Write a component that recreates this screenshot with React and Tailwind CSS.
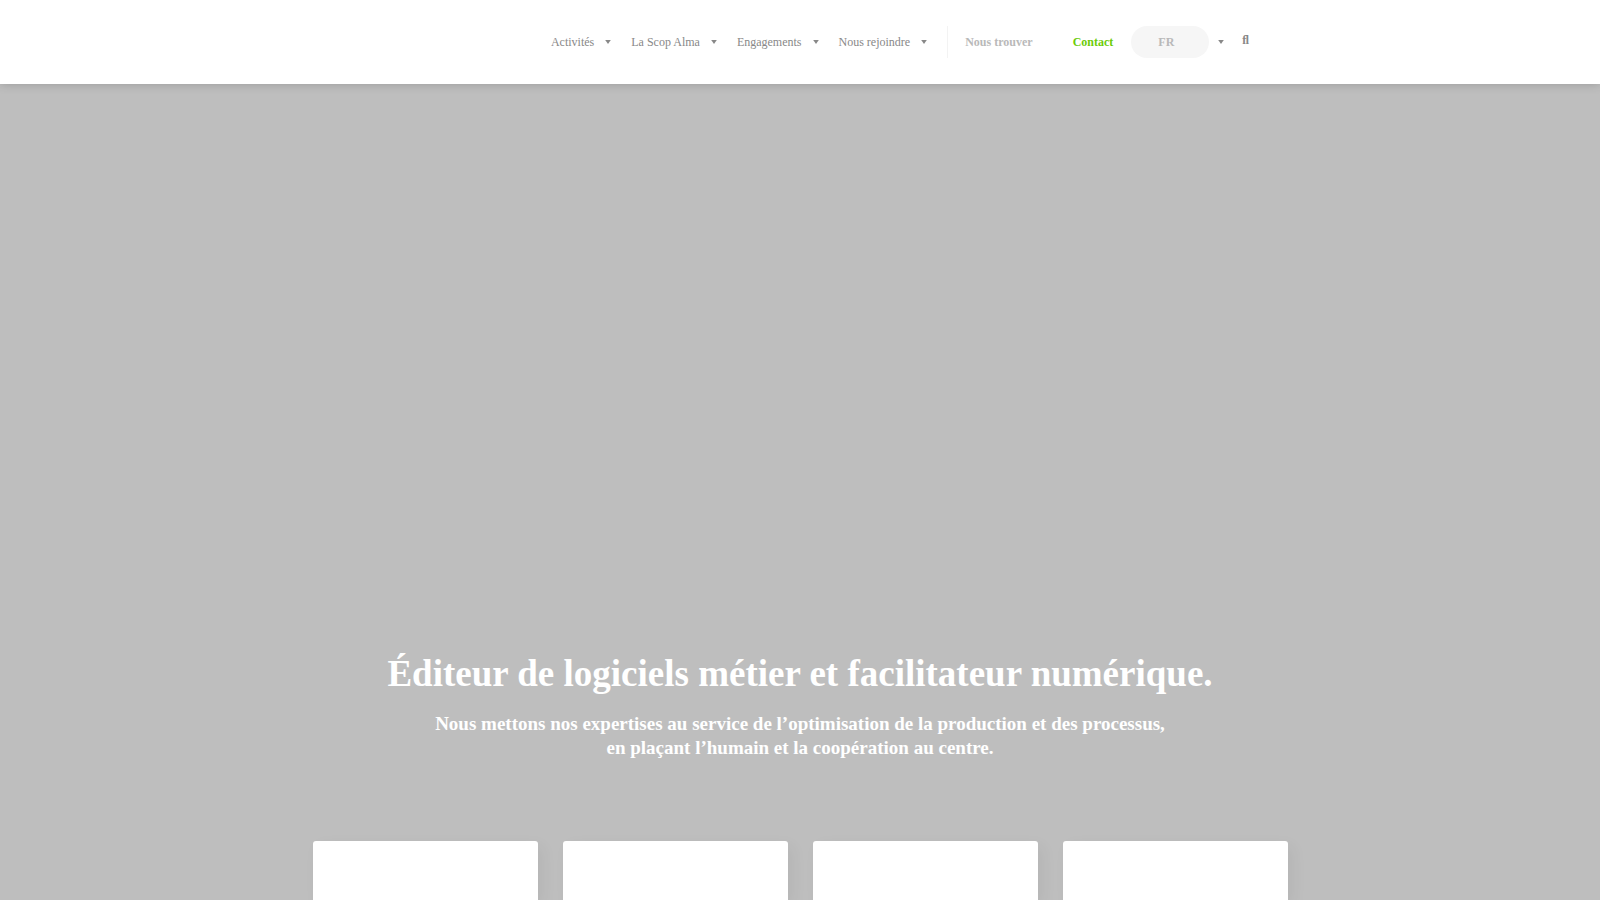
const menus = ["Activités", "La Scop Alma", "Engagements", "Nous rejoindre"];

const cards = ["card-1", "card-2", "card-3", "card-4"];

function Caret() {
  return (
    <svg viewBox="0 0 6 4" className="h-1 w-1.5" fill="currentColor" aria-hidden="true">
      <path d="M0.2 0h5.6L3 4z" />
    </svg>
  );
}

export default function App() {
  return (
    <div className="flex h-screen flex-col overflow-hidden bg-[#bebebe] font-['Liberation_Serif',serif]">
      <header className="relative bg-white shadow-[0_0_10px_rgba(0,0,0,0.2)]">
        <nav className="mx-auto flex h-21 w-full max-w-[1000px] items-center justify-end pr-[51px] text-[12px] text-[#888888]">
          {menus.map((label) => (
            <button key={label} type="button" className="flex items-center gap-[11px] pr-5 whitespace-nowrap">
              {label}
              <Caret />
            </button>
          ))}
          <div className="h-8 border-l border-[#f3f3f3]" />
          <a href="#trouver" className="pl-[17px] font-bold whitespace-nowrap text-[#b9b9b9]">
            Nous trouver
          </a>
          <a href="#contact" className="pl-10 font-bold text-[#6ccc0a]">
            Contact
          </a>
          <button type="button" className="ml-[18px] flex items-center gap-[9px] font-bold">
            <span className="flex h-8 w-[78px] items-center rounded-full bg-[#f6f6f6] pl-[27px] text-[#b9b9b9]">
              FR
            </span>
            <Caret />
          </button>
          <button type="button" aria-label="Rechercher" className="ml-[18px] pb-1 font-bold">
            ﬂ
          </button>
        </nav>
      </header>

      <main className="flex flex-1 flex-col items-center justify-end text-center font-bold text-white">
        <h1 className="text-[37px] leading-12">
          Éditeur de logiciels métier et facilitateur numérique.
        </h1>
        <p className="mt-[14px] text-[19px] leading-6">
          Nous mettons nos expertises au service de l’optimisation de la production et des processus,
          <br />
          en plaçant l’humain et la coopération au centre.
        </p>
        <div className="mt-[81px] grid w-full max-w-[975px] grid-cols-4 gap-[25px]">
          {cards.map((id) => (
            <article key={id} className="h-[59px] rounded-t-[3px] bg-white shadow-[5px_5px_15px_rgba(0,0,0,0.05)]" />
          ))}
        </div>
      </main>
    </div>
  );
}
